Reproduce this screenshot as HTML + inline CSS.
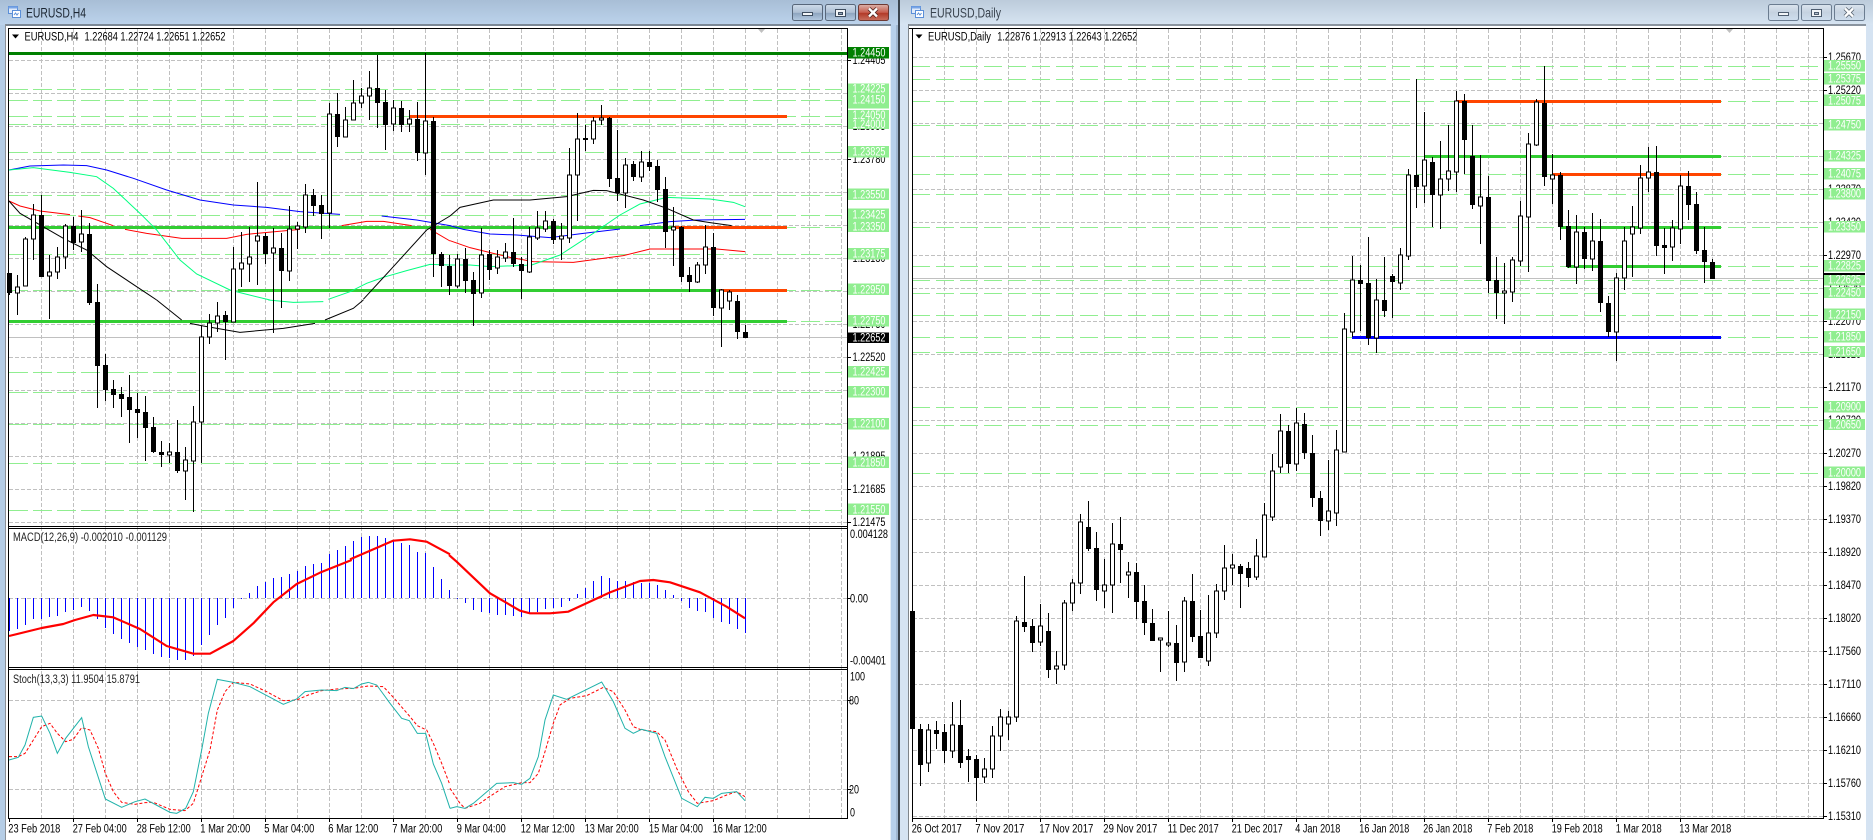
<!DOCTYPE html>
<html><head><meta charset="utf-8"><title>EURUSD</title>
<style>
html,body{margin:0;padding:0;background:#fff;overflow:hidden}
svg{display:block}
text{font-family:"Liberation Sans",sans-serif;font-size:11.5px;fill:#000}
.w text{fill:#fff}
.c{shape-rendering:crispEdges}
</style></head><body>
<svg xmlns="http://www.w3.org/2000/svg" width="1873" height="840" viewBox="0 0 1873 840">
<defs>
<linearGradient id="t1" x1="0" y1="0" x2="0" y2="1"><stop offset="0" stop-color="#a8bed6"/><stop offset="1" stop-color="#bcd3ec"/></linearGradient>
<linearGradient id="t2" x1="0" y1="0" x2="0" y2="1"><stop offset="0" stop-color="#bccbdb"/><stop offset="1" stop-color="#d7e4f2"/></linearGradient>
<linearGradient id="b1" x1="0" y1="0" x2="0" y2="1"><stop offset="0" stop-color="#cfdcea"/><stop offset=".5" stop-color="#aebfd3"/><stop offset=".55" stop-color="#8ea5bf"/><stop offset="1" stop-color="#b5cbe2"/></linearGradient>
<linearGradient id="b2" x1="0" y1="0" x2="0" y2="1"><stop offset="0" stop-color="#dbb3ab"/><stop offset=".5" stop-color="#c75c4d"/><stop offset=".55" stop-color="#b23a28"/><stop offset="1" stop-color="#c9705f"/></linearGradient>
<linearGradient id="b3" x1="0" y1="0" x2="0" y2="1"><stop offset="0" stop-color="#dbe4ee"/><stop offset=".5" stop-color="#c5d2e0"/><stop offset="1" stop-color="#cfdeee"/></linearGradient>
</defs>
<rect width="1873" height="840" fill="#fff"/>
<!-- window frames -->
<rect x="0" y="0" width="898" height="25" fill="url(#t1)"/>
<rect x="0" y="25" width="5" height="815" fill="#b5cde6"/>
<rect x="891" y="25" width="7" height="815" fill="#b7d0ea"/>
<rect x="890" y="25" width="1" height="815" fill="#e4edf6"/>
<rect x="896" y="25" width="2" height="815" fill="#9fb6cf"/>
<rect x="898" y="0" width="2" height="840" fill="#3a444e"/>
<rect x="900" y="0" width="973" height="25" fill="url(#t2)"/>
<rect x="900" y="25" width="8" height="815" fill="#d5e3f2"/>
<rect x="1866" y="25" width="7" height="815" fill="#d5e3f2"/>
<g class="c">
<rect x="5" y="24" width="886" height="2" fill="#7b8896"/><rect x="5" y="24" width="1" height="816" fill="#8a8f96"/>
<rect x="908" y="24" width="958" height="2" fill="#8a949f"/><rect x="908" y="24" width="1" height="816" fill="#7f858b"/>
</g>
<!-- title icons and text -->
<g>
<rect x="8.5" y="6.5" width="9" height="7" fill="#dfeafa" stroke="#5b8fd8"/><rect x="8.5" y="6.5" width="9" height="2" fill="#7aa5e6"/>
<rect x="12.5" y="10.5" width="8" height="7" fill="#fff" stroke="#5b8fd8"/><path d="M14 15l1.500-2 1.500 2 1.500-2" fill="none" stroke="#5b8fd8"/>
<rect x="911.500" y="6.500" width="9" height="7" fill="#dfeafa" stroke="#5b8fd8"/><rect x="911.500" y="6.500" width="9" height="2" fill="#7aa5e6"/>
<rect x="915.500" y="10.500" width="8" height="7" fill="#fff" stroke="#5b8fd8"/><path d="M917 15l1.500-2 1.500 2 1.500-2" fill="none" stroke="#5b8fd8"/>
</g>
<text x="26" y="17.500" textLength="60" lengthAdjust="spacingAndGlyphs" style="font-size:13.500px;fill:#1c2733">EURUSD,H4</text>
<text x="930" y="17.500" textLength="71" lengthAdjust="spacingAndGlyphs" style="font-size:13.500px;fill:#39434e">EURUSD,Daily</text>
<!-- buttons -->
<rect x="792.500" y="4.500" width="30" height="16" rx="2" fill="url(#b1)" stroke="#58677a"/>
<rect x="802.500" y="12.500" width="10" height="3" fill="#f2f5f8" stroke="#3e4d5f"/>
<rect x="825.500" y="4.500" width="30" height="16" rx="2" fill="url(#b1)" stroke="#58677a"/>
<rect x="835.500" y="9.500" width="10" height="7" fill="#f2f5f8" stroke="#3e4d5f"/><rect x="838.500" y="12.500" width="4" height="2" fill="#93a5b9" stroke="#3e4d5f"/>
<rect x="858.500" y="4.500" width="30" height="16" rx="2" fill="url(#b2)" stroke="#6e3a34"/>
<path d="M869 8.500l8 8M877 8.500l-8 8" stroke="#4a2420" stroke-width="4"/><path d="M869 8.500l8 8M877 8.500l-8 8" stroke="#fff" stroke-width="2.400"/>
<rect x="1768.500" y="4.500" width="30" height="16" rx="2" fill="url(#b3)" stroke="#6b7c90"/>
<rect x="1778.500" y="12.500" width="10" height="3" fill="#f2f5f8" stroke="#4e5d6f"/>
<rect x="1801.500" y="4.500" width="30" height="16" rx="2" fill="url(#b3)" stroke="#6b7c90"/>
<rect x="1811.500" y="9.500" width="10" height="7" fill="#f2f5f8" stroke="#4e5d6f"/><rect x="1814.500" y="12.500" width="4" height="2" fill="#b0bccb" stroke="#4e5d6f"/>
<rect x="1834.500" y="4.500" width="30" height="16" rx="2" fill="url(#b3)" stroke="#6b7c90"/>
<path d="M1845 8.500l8 8M1853 8.500l-8 8" stroke="#56626f" stroke-width="4"/><path d="M1845 8.500l8 8M1853 8.500l-8 8" stroke="#fff" stroke-width="2.400"/>

<!-- H4 grid -->
<g class="c" fill="none" stroke="#c0c0c0" stroke-dasharray="4 2">
<path d="M41.500 29V819M73.500 29V819M105.500 29V819M137.500 29V819M169.500 29V819M201.500 29V819M233.500 29V819M265.500 29V819M297.500 29V819M329.500 29V819M361.500 29V819M393.500 29V819M425.500 29V819M457.500 29V819M489.500 29V819M521.500 29V819M553.500 29V819M585.500 29V819M617.500 29V819M649.500 29V819M681.500 29V819M713.500 29V819M745.500 29V819M777.500 29V819M809.500 29V819M841.500 29V819"/>
<path d="M9 60.500H847M9 93.500H847M9 126.500H847M9 159.500H847M9 192.500H847M9 225.500H847M9 258.500H847M9 291.500H847M9 324.500H847M9 357.500H847M9 390.500H847M9 423.500H847M9 456.500H847M9 489.500H847M9 522.500H847M9 598.500H847M9 700.500H847M9 789.500H847"/>
</g>
<g class="c" fill="none" stroke="#90ee90" stroke-width="1" stroke-dasharray="19 5">
<path d="M9 89.500H842M9 100.500H842M9 116.500H842M9 124.500H842M9 152.500H842M9 195.500H842M9 215.500H842M9 227.500H842M9 254.500H842M9 290.500H842M9 321.500H842M9 372.500H842M9 392.500H842M9 424.500H842M9 463.500H842M9 510.500H842"/>
</g>
<path class="c" d="M9 337.500H847" stroke="#c0c0c0" fill="none"/>
<g class="c" fill="none" stroke-width="3">
<path d="M9 53.500H847" stroke="#008000"/>
<path d="M9 227.500H673M238 290.500H720M9 321.500H787" stroke="#32cd32"/>
<path d="M409 116.500H787M673 227.500H787M720 290.500H787" stroke="#ff4500"/>
</g>
<!-- H4 moving averages -->
<g fill="none" stroke-width="3">
<g transform="scale(.33333)">
<path stroke="#0000ff" d="M27 510L90 498 190 495 260 497 320 510 400 535 500 570 600 600 700 615 800 622 900 635 1020 643M1145 648L1250 660 1350 677"/>
<path stroke="#ff0000" d="M27 603L60 618 120 633 210 644M235 648L270 653 340 677M375 688L440 700 545 715 680 715 740 703 900 688M1025 677L1100 664 1150 664 1235 677M1290 688L1350 723"/>
<path stroke="#00ff7f" d="M27 510L100 503 210 517 290 530 340 565 420 640 470 690 540 780 590 822 690 870 720 878 810 900M985 898L1050 875 1100 850 1150 832 1220 812 1290 793 1350 795"/>
<path stroke="#000" d="M27 603L60 640 190 715 260 750 320 800 440 880 470 900M1090 898L1180 800 1280 690 1350 648"/>
</g>
<g transform="translate(0,300) scale(.33333)">
<path stroke="#00ff7f" d="M805 0L880 7 970 5"/>
<path stroke="#000" d="M470 0L545 60M570 70L610 78 720 97 850 85 945 70M975 60L1060 25 1090 0"/>
</g>
<g transform="translate(450,0) scale(.33333)">
<path stroke="#0000ff" d="M0 677L40 688 120 702 200 705 300 713 400 700 510 687M570 677L660 665 740 660 885 658"/>
<path stroke="#ff0000" d="M0 722L60 743 130 760 180 772 250 785 370 787 520 767 600 747 700 747 800 747 885 755"/>
<path stroke="#00ff7f" d="M0 795L60 795 120 800 245 795 330 765 430 700 510 645 570 612 650 592 780 597 850 607 885 620"/>
<path stroke="#000" d="M0 648L30 622 130 600 200 600 240 600 350 590 430 571 470 572 580 600 650 625 730 660 780 668 845 677"/>
</g>
</g>
<!-- H4 candles -->
<g class="c" fill="none">
<path stroke="#000" d="M9.500 273V295M17.500 275V315M25.500 237V286M33.500 204V260M41.500 195V277M49.500 255V319M57.500 247V279M65.500 224V269M73.500 217V250M81.500 210V252M89.500 223V305M97.500 284V408M105.500 354V401M113.500 380V408M121.500 387V417M129.500 375V443M137.500 393V438M145.500 396V461M153.500 417V453M161.500 441V467M169.500 443V463M177.500 420V473M185.500 447V500M193.500 406V512M201.500 326V463M209.500 314V344M217.500 302V332M225.500 311V360M233.500 247V322M241.500 232V287M249.500 227V282M257.500 182V285M265.500 233V264M273.500 228V333M281.500 233V308M289.500 206V281M297.500 222V249M305.500 184V233M313.500 189V216M321.500 195V239M329.500 103V228M337.500 93V147M345.500 107V137M353.500 80V120M361.500 88V108M369.500 71V120M377.500 55V128M385.500 90V150M393.500 100V131M401.500 101V132M409.500 110V132M417.500 102V161M425.500 53V175M433.500 117V277M441.500 252V287M449.500 255V295M457.500 254V288M465.500 248V293M473.500 272V326M481.500 228V298M489.500 250V280M497.500 250V274M505.500 243V262M513.500 218V267M521.500 257V299M529.500 227V273M537.500 211V240M545.500 211V232M553.500 219V244M561.500 223V260M569.500 148V243M577.500 113V221M585.500 125V151M593.500 117V144M601.500 105V125M609.500 117V187M617.500 130V201M625.500 158V208M633.500 161V181M641.500 151V182M649.500 151V171M657.500 160V202M665.500 177V248M673.500 207V266M681.500 226V282M689.500 267V292M697.500 262V283M705.500 225V274M713.500 233V316M721.500 289V347M729.500 290V310M737.500 295V339M745.500 325V338"/>
<path fill="#fff" stroke="#000" d="M15.500 287h4v6h-4zM23.500 239h4v47h-4zM31.500 215h4v24h-4zM47.500 272h4v4h-4zM55.500 257h4v15h-4zM63.500 226h4v31h-4zM79.500 234h4v8h-4zM167.500 452h4v3h-4zM183.500 460h4v11h-4zM191.500 422h4v39h-4zM199.500 337h4v85h-4zM207.500 323h4v14h-4zM215.500 316h4v7h-4zM231.500 269h4v53h-4zM239.500 263h4v6h-4zM247.500 257h4v7h-4zM255.500 236h4v5h-4zM271.500 248h4v5h-4zM287.500 229h4v42h-4zM295.500 226h4v3h-4zM303.500 195h4v32h-4zM327.500 114h4v99h-4zM343.500 120h4v17h-4zM351.500 103h4v17h-4zM359.500 96h4v7h-4zM367.500 88h4v8h-4zM391.500 108h4v16h-4zM407.500 119h4v5h-4zM423.500 121h4v32h-4zM455.500 259h4v27h-4zM479.500 255h4v38h-4zM495.500 257h4v11h-4zM503.500 252h4v6h-4zM527.500 237h4v35h-4zM535.500 228h4v10h-4zM543.500 221h4v8h-4zM559.500 236h4v3h-4zM567.500 175h4v63h-4zM575.500 139h4v36h-4zM591.500 121h4v18h-4zM599.500 118h4v2h-4zM623.500 165h4v28h-4zM639.500 162h4v15h-4zM671.500 227h4v3h-4zM695.500 265h4v17h-4zM703.500 247h4v18h-4zM719.500 290h4v18h-4zM727.500 292h4v9h-4z"/>
<path stroke="#000" stroke-width="5" d="M9.500 273V293M41.500 215V277M73.500 226V243M89.500 234V303M97.500 302V366M105.500 365V390M113.500 389V395M121.500 394V399M129.500 397V410M137.500 409V413M145.500 412V428M153.500 427V452M161.500 452V455M177.500 452V471M225.500 315V322M265.500 236V254M281.500 248V271M313.500 195V206M321.500 205V214M337.500 114V137M377.500 88V103M385.500 102V125M401.500 108V125M417.500 119V153M433.500 121V254M441.500 254V266M449.500 266V286M465.500 259V281M473.500 280V294M489.500 254V270M513.500 252V264M521.500 264V271M553.500 221V240M585.500 138V140M609.500 118V179M617.500 178V193M633.500 164V177M649.500 162V167M657.500 166V190M665.500 189V232M681.500 227V277M689.500 275V282M713.500 247V308M737.500 301V332M745.500 332V338"/>
</g>
<!-- MACD -->
<path class="c" fill="none" stroke="#0000ff" d="M9.500 598V631M17.500 598V629M25.500 598V625M33.500 598V619M41.500 598V619M49.500 598V617M57.500 598V616M65.500 598V612M73.500 598V610M81.500 598V607M89.500 598V611M97.500 598V619M105.500 598V628M113.500 598V634M121.500 598V639M129.500 598V643M137.500 598V647M145.500 598V650M153.500 598V654M161.500 598V657M169.500 598V658M177.500 598V660M185.500 598V660M193.500 598V656M201.500 598V645M209.500 598V635M217.500 598V625M225.500 598V618M233.500 598V608M241.500 598V599M249.500 598V593M257.500 598V586M265.500 598V582M273.500 598V578M281.500 598V577M289.500 598V574M297.500 598V571M305.500 598V566M313.500 598V564M321.500 598V563M329.500 598V554M337.500 598V550M345.500 598V546M353.500 598V541M361.500 598V537M369.500 598V536M377.500 598V536M385.500 598V538M393.500 598V540M401.500 598V543M409.500 598V545M417.500 598V552M425.500 598V553M433.500 598V567M441.500 598V579M449.500 598V590M457.500 598V599M465.500 598V603M473.500 598V610M481.500 598V612M489.500 598V613M497.500 598V615M505.500 598V615M513.500 598V616M521.500 598V617M529.500 598V613M537.500 598V612M545.500 598V609M553.500 598V608M561.500 598V607M569.500 598V601M577.500 598V594M585.500 598V588M593.500 598V581M601.500 598V576M609.500 598V578M617.500 598V581M625.500 598V581M633.500 598V582M641.500 598V583M649.500 598V583M657.500 598V585M665.500 598V590M673.500 598V595M681.500 598V601M689.500 598V608M697.500 598V611M705.500 598V612M713.500 598V618M721.500 598V622M729.500 598V624M737.500 598V629M745.500 598V633"/>
<g fill="none" stroke="#ff0000" stroke-width="6.500" stroke-linejoin="round">
<path transform="translate(0,560) scale(.33333)" d="M27 228L125 204 190 192 225 180 280 165 340 172 420 207 500 258 580 281 630 281 700 243 760 190 820 127 890 72 960 38 1055 0"/>
<path transform="translate(0,300) scale(.33333)" d="M1050 778L1180 722 1230 718 1280 725 1350 763"/>
<path transform="translate(450,560) scale(.33333)" d="M-3 -15L20 5 120 100 210 152 240 160 300 160 355 155 420 125 480 97 570 63 610 60 660 67 750 97 830 140 885 175"/>
</g>
<!-- Stochastic -->
<g fill="none" stroke-width="3">
<path transform="translate(0,560) scale(.33333)" stroke="#ff0000" stroke-dasharray="9 6" d="M27 590L55 590 75 580 100 540 125 500 150 490 172 520 197 545 220 538 245 503 270 510 295 565 316 640 340 695 365 727 405 733 435 728 460 727 510 748 555 752 580 730 605 650 630 570 652 450 675 395 700 367 750 372 800 395 850 422 890 420 925 405 965 392 1010 387 1060 385 1105 378 1150 380 1180 412 1230 470 1252 497 1280 510 1300 550 1325 610 1350 675"/>
<path transform="translate(450,560) scale(.33333)" stroke="#ff0000" stroke-dasharray="9 6" d="M0 685L30 730 45 745 90 730 115 712 165 680 215 668 240 668 265 640 285 575 310 490 330 435 360 415 410 407 460 382 490 395 525 450 550 500 575 510 620 515 645 540 680 625 715 695 742 730 790 722 830 705 860 695 885 710"/>
<path transform="translate(0,560) scale(.33333)" stroke="#20b2aa" d="M27 600L55 592 75 555 100 472 125 468 150 520 172 580 197 535 245 473 265 560 316 717 365 742 405 725 435 717 510 757 530 760 557 745 580 695 605 570 625 460 652 358 700 367 750 380 850 433 890 417 915 395 965 390 1010 392 1035 382 1060 386 1085 372 1105 367 1130 375 1170 430 1205 475 1228 482 1252 520 1277 520 1300 612 1325 670 1350 745"/>
<path transform="translate(450,560) scale(.33333)" stroke="#20b2aa" d="M0 745L20 740 45 745 70 730 140 670 190 668 215 673 240 655 265 590 285 480 310 405 350 418 455 366 490 425 525 505 550 520 575 508 620 520 645 590 695 715 742 740 765 712 790 715 815 700 860 695 885 722"/>
</g>
<!-- H4 frame -->
<g class="c" fill="none" stroke="#000">
<path d="M847.500 28V819M8.500 28V819M8 28.500H848M8 526.500H848M8 528.500H848M8 667.500H848M8 669.500H848M8 818.500H848"/>
<path d="M9.500 819v3M73.500 819v3M137.500 819v3M201.500 819v3M265.500 819v3M329.500 819v3M393.500 819v3M457.500 819v3M521.500 819v3M585.500 819v3M649.500 819v3M713.500 819v3M848 60.500h3M848 159.500h3M848 258.500h3M848 357.500h3M848 489.500h3M848 522.500h3M848 598.500h3M848 700.500h3M848 789.500h3"/>
</g>
<path d="M12 34.500h7l-3.500 4z" fill="#000"/>
<path d="M758 29h7l-3.500 4z" fill="#c0c0c0"/>
<text x="24.500" y="40.500" textLength="54" lengthAdjust="spacingAndGlyphs">EURUSD,H4</text>
<text x="84.500" y="40.500" textLength="141" lengthAdjust="spacingAndGlyphs">1.22684 1.22724 1.22651 1.22652</text>
<text x="13" y="541" textLength="154" lengthAdjust="spacingAndGlyphs" style="fill:#222">MACD(12,26,9) -0.002010 -0.001129</text>
<text x="13" y="683" textLength="127" lengthAdjust="spacingAndGlyphs" style="fill:#222">Stoch(13,3,3) 11.9504 15.8791</text>
<!-- H4 axis labels -->
<g>
<text x="852.500" y="64" textLength="33" lengthAdjust="spacingAndGlyphs">1.24405</text>
<text x="852.500" y="130" textLength="33" lengthAdjust="spacingAndGlyphs">1.23995</text>
<text x="852.500" y="163" textLength="33" lengthAdjust="spacingAndGlyphs">1.23780</text>
<text x="852.500" y="262" textLength="33" lengthAdjust="spacingAndGlyphs">1.23130</text>
<text x="852.500" y="328" textLength="33" lengthAdjust="spacingAndGlyphs">1.22730</text>
<text x="852.500" y="361" textLength="33" lengthAdjust="spacingAndGlyphs">1.22520</text>
<text x="852.500" y="460" textLength="33" lengthAdjust="spacingAndGlyphs">1.21895</text>
<text x="852.500" y="493" textLength="33" lengthAdjust="spacingAndGlyphs">1.21685</text>
<text x="852.500" y="526" textLength="33" lengthAdjust="spacingAndGlyphs">1.21475</text>
<text x="850" y="538" textLength="38" lengthAdjust="spacingAndGlyphs">0.004128</text>
<text x="850" y="602.500" textLength="18" lengthAdjust="spacingAndGlyphs">0.00</text>
<text x="850" y="664.500" textLength="36" lengthAdjust="spacingAndGlyphs">-0.00401</text>
<text x="850" y="680.500" textLength="15" lengthAdjust="spacingAndGlyphs">100</text>
<text x="849" y="704.500" textLength="10" lengthAdjust="spacingAndGlyphs">80</text>
<text x="849" y="793.500" textLength="10" lengthAdjust="spacingAndGlyphs">20</text>
<text x="850" y="816.500" textLength="5" lengthAdjust="spacingAndGlyphs">0</text>
</g>
<path class="c" fill="#90ee90" d="M848 83.500h41v25h-41zM848 110h41v19h-41zM848 146h41v11.500h-41zM848 188.500h41v11.500h-41zM848 208.500h41v23.500h-41zM848 248h41v11.500h-41zM848 283.500h41v11.500h-41zM848 315h41v11.500h-41zM848 366h41v11.500h-41zM848 386h41v11.500h-41zM848 418h41v11.500h-41zM848 456.500h41v11.500h-41zM848 503.500h41v11.500h-41z"/>
<rect class="c" x="848" y="47" width="41" height="11.500" fill="#008000"/>
<rect class="c" x="848" y="332.500" width="41" height="10.500" fill="#000"/>
<g class="w">
<text x="852.500" y="56.500" textLength="33" lengthAdjust="spacingAndGlyphs">1.24450</text>
<text x="852.500" y="92.500" textLength="33" lengthAdjust="spacingAndGlyphs">1.24225</text>
<text x="852.500" y="103.500" textLength="33" lengthAdjust="spacingAndGlyphs">1.24150</text>
<text x="852.500" y="119" textLength="33" lengthAdjust="spacingAndGlyphs">1.24050</text>
<text x="852.500" y="128" textLength="33" lengthAdjust="spacingAndGlyphs">1.24000</text>
<text x="852.500" y="155.700" textLength="33" lengthAdjust="spacingAndGlyphs">1.23825</text>
<text x="852.500" y="198.300" textLength="33" lengthAdjust="spacingAndGlyphs">1.23550</text>
<text x="852.500" y="218.300" textLength="33" lengthAdjust="spacingAndGlyphs">1.23425</text>
<text x="852.500" y="230.300" textLength="33" lengthAdjust="spacingAndGlyphs">1.23350</text>
<text x="852.500" y="257.700" textLength="33" lengthAdjust="spacingAndGlyphs">1.23175</text>
<text x="852.500" y="293.300" textLength="33" lengthAdjust="spacingAndGlyphs">1.22950</text>
<text x="852.500" y="324.700" textLength="33" lengthAdjust="spacingAndGlyphs">1.22750</text>
<text x="852.500" y="341.700" textLength="33" lengthAdjust="spacingAndGlyphs">1.22652</text>
<text x="852.500" y="375.700" textLength="33" lengthAdjust="spacingAndGlyphs">1.22425</text>
<text x="852.500" y="395.700" textLength="33" lengthAdjust="spacingAndGlyphs">1.22300</text>
<text x="852.500" y="427.700" textLength="33" lengthAdjust="spacingAndGlyphs">1.22100</text>
<text x="852.500" y="466.300" textLength="33" lengthAdjust="spacingAndGlyphs">1.21850</text>
<text x="852.500" y="513.300" textLength="33" lengthAdjust="spacingAndGlyphs">1.21550</text>
</g>
<g>
<text x="8.300" y="832.500" textLength="52" lengthAdjust="spacingAndGlyphs">23 Feb 2018</text>
<text x="72.700" y="832.500" textLength="54" lengthAdjust="spacingAndGlyphs">27 Feb 04:00</text>
<text x="136.700" y="832.500" textLength="54" lengthAdjust="spacingAndGlyphs">28 Feb 12:00</text>
<text x="200.300" y="832.500" textLength="50" lengthAdjust="spacingAndGlyphs">1 Mar 20:00</text>
<text x="264.300" y="832.500" textLength="50" lengthAdjust="spacingAndGlyphs">5 Mar 04:00</text>
<text x="328.300" y="832.500" textLength="50" lengthAdjust="spacingAndGlyphs">6 Mar 12:00</text>
<text x="392.300" y="832.500" textLength="50" lengthAdjust="spacingAndGlyphs">7 Mar 20:00</text>
<text x="456.700" y="832.500" textLength="49" lengthAdjust="spacingAndGlyphs">9 Mar 04:00</text>
<text x="520.700" y="832.500" textLength="54" lengthAdjust="spacingAndGlyphs">12 Mar 12:00</text>
<text x="584.700" y="832.500" textLength="54" lengthAdjust="spacingAndGlyphs">13 Mar 20:00</text>
<text x="649" y="832.500" textLength="54" lengthAdjust="spacingAndGlyphs">15 Mar 04:00</text>
<text x="712.700" y="832.500" textLength="54" lengthAdjust="spacingAndGlyphs">16 Mar 12:00</text>
</g>

<!-- Daily grid -->
<g class="c" fill="none" stroke="#c0c0c0" stroke-dasharray="4 2">
<path d="M944.500 29V819M976.500 29V819M1008.500 29V819M1040.500 29V819M1072.500 29V819M1104.500 29V819M1136.500 29V819M1168.500 29V819M1200.500 29V819M1232.500 29V819M1264.500 29V819M1296.500 29V819M1328.500 29V819M1360.500 29V819M1392.500 29V819M1424.500 29V819M1456.500 29V819M1488.500 29V819M1520.500 29V819M1552.500 29V819M1584.500 29V819M1616.500 29V819M1648.500 29V819M1680.500 29V819M1712.500 29V819M1744.500 29V819M1776.500 29V819M1808.500 29V819"/>
<path d="M913 57.500H1823M913 90.500H1823M913 123.500H1823M913 156.500H1823M913 189.500H1823M913 222.500H1823M913 255.500H1823M913 288.500H1823M913 321.500H1823M913 354.500H1823M913 387.500H1823M913 420.500H1823M913 453.500H1823M913 486.500H1823M913 519.500H1823M913 552.500H1823M913 585.500H1823M913 618.500H1823M913 651.500H1823M913 684.500H1823M913 717.500H1823M913 750.500H1823M913 783.500H1823M913 816.500H1823"/>
</g>
<g class="c" fill="none" stroke="#90ee90" stroke-dasharray="18 6">
<path d="M912 66.500H1818M912 79.500H1818M912 101.500H1818M912 125.500H1818M912 156.500H1818M912 174.500H1818M912 194.500H1818M912 227.500H1818M912 266.500H1818M912 280.500H1818M912 293.500H1818M912 315.500H1818M912 337.500H1818M912 352.500H1818M912 407.500H1818M912 425.500H1818M912 473.500H1818"/>
</g>
<path class="c" d="M913 278.500H1823" stroke="#c0c0c0" fill="none"/>
<g class="c" fill="none" stroke-width="3">
<path d="M1425 156.500H1721M1560 227.500H1721M1567 266.500H1721" stroke="#32cd32"/>
<path d="M1457 101.500H1721M1552 174.500H1721" stroke="#ff4500"/>
<path d="M1352 337.500H1721" stroke="#0000ff"/>
</g>
<!-- Daily candles -->
<g class="c" fill="none">
<path stroke="#000" d="M912.500 593V738M920.500 724V786M928.500 724V772M936.500 721V749M944.500 724V763M952.500 702V758M960.500 700V768M968.500 749V782M976.500 755V801M984.500 758V783M992.500 726V778M1000.500 709V751M1008.500 711V740M1016.500 616V722M1024.500 576V632M1032.500 619V652M1040.500 604V646M1048.500 613V678M1056.500 651V684M1064.500 600V670M1072.500 579V611M1080.500 514V594M1088.500 501V551M1096.500 532V601M1104.500 559V608M1112.500 523V613M1120.500 517V583M1128.500 562V598M1136.500 563V619M1144.500 585V635M1152.500 609V641M1160.500 638V672M1168.500 611V647M1176.500 625V681M1184.500 597V672M1192.500 574V642M1200.500 610V658M1208.500 595V666M1216.500 584V638M1224.500 545V600M1232.500 554V585M1240.500 564V608M1248.500 562V587M1256.500 539V580M1264.500 503V557M1272.500 454V521M1280.500 414V473M1288.500 425V473M1296.500 408V471M1304.500 413V459M1312.500 435V507M1320.500 491V536M1328.500 460V530M1336.500 430V526M1344.500 313V452M1352.500 256V337M1360.500 265V331M1368.500 237V345M1376.500 279V353M1384.500 257V317M1392.500 274V318M1400.500 248V290M1408.500 169V260M1416.500 79V208M1424.500 112V203M1432.500 157V227M1440.500 141V229M1448.500 125V191M1456.500 91V192M1464.500 94V174M1472.500 125V209M1480.500 155V244M1488.500 176V293M1496.500 257V319M1504.500 263V324M1512.500 257V302M1520.500 201V266M1528.500 133V272M1536.500 99V146M1544.500 66V186M1552.500 154V204M1560.500 172V240M1568.500 210V268M1576.500 215V284M1584.500 227V269M1592.500 213V271M1600.500 219V312M1608.500 296V337M1616.500 273V361M1624.500 227V290M1632.500 206V277M1640.500 165V234M1648.500 147V192M1656.500 146V256M1664.500 228V274M1672.500 220V261M1680.500 175V244M1688.500 171V220M1696.500 192V254M1704.500 227V283M1712.500 259V279"/>
<path fill="#fff" stroke="#000" d="M926.500 730h4v33h-4zM950.500 725h4v26h-4zM982.500 769h4v8h-4zM990.500 736h4v33h-4zM998.500 717h4v19h-4zM1006.500 717h4v7h-4zM1014.500 621h4v96h-4zM1038.500 626h4v16h-4zM1054.500 666h4v3h-4zM1062.500 603h4v62h-4zM1070.500 583h4v20h-4zM1078.500 522h4v61h-4zM1102.500 585h4v6h-4zM1110.500 544h4v41h-4zM1126.500 572h4v3h-4zM1158.500 638h4v2h-4zM1166.500 643h4v2h-4zM1182.500 601h4v61h-4zM1206.500 633h4v28h-4zM1214.500 591h4v42h-4zM1222.500 568h4v23h-4zM1230.500 565h4v3h-4zM1254.500 556h4v21h-4zM1262.500 515h4v42h-4zM1270.500 471h4v46h-4zM1278.500 431h4v36h-4zM1294.500 423h4v41h-4zM1326.500 511h4v10h-4zM1334.500 450h4v63h-4zM1342.500 329h4v123h-4zM1350.500 280h4v52h-4zM1374.500 300h4v38h-4zM1398.500 255h4v28h-4zM1406.500 175h4v81h-4zM1422.500 160h4v26h-4zM1438.500 179h4v16h-4zM1446.500 171h4v8h-4zM1454.500 101h4v71h-4zM1478.500 197h4v9h-4zM1502.500 291h4v2h-4zM1510.500 260h4v32h-4zM1518.500 216h4v45h-4zM1526.500 144h4v73h-4zM1534.500 102h4v43h-4zM1550.500 175h4v4h-4zM1574.500 232h4v35h-4zM1590.500 241h4v18h-4zM1614.500 278h4v54h-4zM1622.500 241h4v37h-4zM1630.500 227h4v7h-4zM1638.500 178h4v50h-4zM1646.500 172h4v6h-4zM1670.500 228h4v19h-4zM1678.500 186h4v43h-4z"/>
<path stroke="#000" stroke-width="5" d="M912.500 611V729M920.500 729V765M936.500 730V734M944.500 732V751M960.500 725V763M968.500 756V760M976.500 759V778M1024.500 622V627M1032.500 626V643M1048.500 631V670M1088.500 527V549M1096.500 548V590M1120.500 544V550M1136.500 572V602M1144.500 601V623M1152.500 623V641M1176.500 643V663M1192.500 601V637M1200.500 636V658M1240.500 566V574M1248.500 568V578M1288.500 431V464M1304.500 424V453M1312.500 453V498M1320.500 498V521M1360.500 280V284M1368.500 283V338M1384.500 300V311M1392.500 276V282M1416.500 175V187M1432.500 162V195M1464.500 101V140M1472.500 156V205M1488.500 197V281M1496.500 280V293M1544.500 103V177M1560.500 175V227M1568.500 226V267M1584.500 232V259M1600.500 241V303M1608.500 303V332M1656.500 172V246M1664.500 245V248M1688.500 186V205M1696.500 204V251M1704.500 250V262M1712.500 262V279"/>
</g>
<!-- Daily frame -->
<g class="c" fill="none" stroke="#000">
<path d="M1823.500 28V819M912.500 28V740M912.500 740V819M909 28.500H1824M912 818.500H1824"/>
<path d="M912.500 819v3M976.500 819v3M1040.500 819v3M1104.500 819v3M1168.500 819v3M1232.500 819v3M1296.500 819v3M1360.500 819v3M1424.500 819v3M1488.500 819v3M1552.500 819v3M1616.500 819v3M1680.500 819v3M1824 57.500h3M1824 90.500h3M1824 255.500h3M1824 321.500h3M1824 387.500h3M1824 453.500h3M1824 486.500h3M1824 519.500h3M1824 552.500h3M1824 585.500h3M1824 618.500h3M1824 651.500h3M1824 684.500h3M1824 717.500h3M1824 750.500h3M1824 783.500h3M1824 816.500h3"/>
</g>
<path d="M915.500 34.500h7l-3.500 4z" fill="#000"/>
<path d="M1726 29h7l-3.500 4z" fill="#c0c0c0"/>
<text x="928" y="40.500" textLength="63" lengthAdjust="spacingAndGlyphs">EURUSD,Daily</text>
<text x="997.300" y="40.500" textLength="140" lengthAdjust="spacingAndGlyphs">1.22876 1.22913 1.22643 1.22652</text>
<g>
<text x="1828" y="61" textLength="33" lengthAdjust="spacingAndGlyphs">1.25670</text>
<text x="1828" y="94" textLength="33" lengthAdjust="spacingAndGlyphs">1.25220</text>
<text x="1828" y="193" textLength="33" lengthAdjust="spacingAndGlyphs">1.23870</text>
<text x="1828" y="226" textLength="33" lengthAdjust="spacingAndGlyphs">1.23420</text>
<text x="1828" y="259" textLength="33" lengthAdjust="spacingAndGlyphs">1.22970</text>
<text x="1828" y="292" textLength="33" lengthAdjust="spacingAndGlyphs">1.22520</text>
<text x="1828" y="325" textLength="33" lengthAdjust="spacingAndGlyphs">1.22070</text>
<text x="1828" y="358" textLength="33" lengthAdjust="spacingAndGlyphs">1.21620</text>
<text x="1828" y="391" textLength="33" lengthAdjust="spacingAndGlyphs">1.21170</text>
<text x="1828" y="424" textLength="33" lengthAdjust="spacingAndGlyphs">1.20720</text>
<text x="1828" y="457" textLength="33" lengthAdjust="spacingAndGlyphs">1.20270</text>
<text x="1828" y="490" textLength="33" lengthAdjust="spacingAndGlyphs">1.19820</text>
<text x="1828" y="523" textLength="33" lengthAdjust="spacingAndGlyphs">1.19370</text>
<text x="1828" y="556" textLength="33" lengthAdjust="spacingAndGlyphs">1.18920</text>
<text x="1828" y="589" textLength="33" lengthAdjust="spacingAndGlyphs">1.18470</text>
<text x="1828" y="622" textLength="33" lengthAdjust="spacingAndGlyphs">1.18020</text>
<text x="1828" y="655" textLength="33" lengthAdjust="spacingAndGlyphs">1.17560</text>
<text x="1828" y="688" textLength="33" lengthAdjust="spacingAndGlyphs">1.17110</text>
<text x="1828" y="721" textLength="33" lengthAdjust="spacingAndGlyphs">1.16660</text>
<text x="1828" y="754" textLength="33" lengthAdjust="spacingAndGlyphs">1.16210</text>
<text x="1828" y="787" textLength="33" lengthAdjust="spacingAndGlyphs">1.15760</text>
<text x="1828" y="820" textLength="33" lengthAdjust="spacingAndGlyphs">1.15310</text>
</g>
<rect class="c" x="1824" y="273" width="41" height="11" fill="#000"/>
<path class="c" fill="#90ee90" d="M1824 60h41v11.500h-41zM1824 73h41v11.500h-41zM1824 94.500h41v11.500h-41zM1824 119h41v11.500h-41zM1824 150h41v11.500h-41zM1824 168h41v11.500h-41zM1824 188h41v11.500h-41zM1824 221h41v11.500h-41zM1824 260h41v11.500h-41zM1824 275h41v10.500h-41zM1824 287h41v11h-41zM1824 308.500h41v11.500h-41zM1824 331h41v11.500h-41zM1824 346h41v11h-41zM1824 401h41v11.500h-41zM1824 419h41v11h-41zM1824 466.500h41v11.500h-41z"/>
<g class="w">
<text x="1828" y="69.700" textLength="33" lengthAdjust="spacingAndGlyphs">1.25550</text>
<text x="1828" y="82.700" textLength="33" lengthAdjust="spacingAndGlyphs">1.25375</text>
<text x="1828" y="104.300" textLength="33" lengthAdjust="spacingAndGlyphs">1.25075</text>
<text x="1828" y="128.700" textLength="33" lengthAdjust="spacingAndGlyphs">1.24750</text>
<text x="1828" y="159.700" textLength="33" lengthAdjust="spacingAndGlyphs">1.24325</text>
<text x="1828" y="177.700" textLength="33" lengthAdjust="spacingAndGlyphs">1.24075</text>
<text x="1828" y="197.700" textLength="33" lengthAdjust="spacingAndGlyphs">1.23800</text>
<text x="1828" y="230.700" textLength="33" lengthAdjust="spacingAndGlyphs">1.23350</text>
<text x="1828" y="269.700" textLength="33" lengthAdjust="spacingAndGlyphs">1.22825</text>
<text x="1828" y="283.700" textLength="33" lengthAdjust="spacingAndGlyphs">1.22625</text>
<text x="1828" y="296.300" textLength="33" lengthAdjust="spacingAndGlyphs">1.22450</text>
<text x="1828" y="318.300" textLength="33" lengthAdjust="spacingAndGlyphs">1.22150</text>
<text x="1828" y="340.700" textLength="33" lengthAdjust="spacingAndGlyphs">1.21850</text>
<text x="1828" y="355.300" textLength="33" lengthAdjust="spacingAndGlyphs">1.21650</text>
<text x="1828" y="410.700" textLength="33" lengthAdjust="spacingAndGlyphs">1.20900</text>
<text x="1828" y="428.300" textLength="33" lengthAdjust="spacingAndGlyphs">1.20650</text>
<text x="1828" y="476.300" textLength="33" lengthAdjust="spacingAndGlyphs">1.20000</text>
</g>
<g>
<text x="911.700" y="832.500" textLength="50" lengthAdjust="spacingAndGlyphs">26 Oct 2017</text>
<text x="975.300" y="832.500" textLength="49" lengthAdjust="spacingAndGlyphs">7 Nov 2017</text>
<text x="1039.300" y="832.500" textLength="54" lengthAdjust="spacingAndGlyphs">17 Nov 2017</text>
<text x="1103.300" y="832.500" textLength="54" lengthAdjust="spacingAndGlyphs">29 Nov 2017</text>
<text x="1167.700" y="832.500" textLength="51" lengthAdjust="spacingAndGlyphs">11 Dec 2017</text>
<text x="1231.700" y="832.500" textLength="51" lengthAdjust="spacingAndGlyphs">21 Dec 2017</text>
<text x="1295.300" y="832.500" textLength="45" lengthAdjust="spacingAndGlyphs">4 Jan 2018</text>
<text x="1359.300" y="832.500" textLength="50" lengthAdjust="spacingAndGlyphs">16 Jan 2018</text>
<text x="1423.300" y="832.500" textLength="49" lengthAdjust="spacingAndGlyphs">26 Jan 2018</text>
<text x="1487.300" y="832.500" textLength="46" lengthAdjust="spacingAndGlyphs">7 Feb 2018</text>
<text x="1551.700" y="832.500" textLength="51" lengthAdjust="spacingAndGlyphs">19 Feb 2018</text>
<text x="1615.700" y="832.500" textLength="46" lengthAdjust="spacingAndGlyphs">1 Mar 2018</text>
<text x="1679.300" y="832.500" textLength="52" lengthAdjust="spacingAndGlyphs">13 Mar 2018</text>
</g>
</svg>
</body></html>
